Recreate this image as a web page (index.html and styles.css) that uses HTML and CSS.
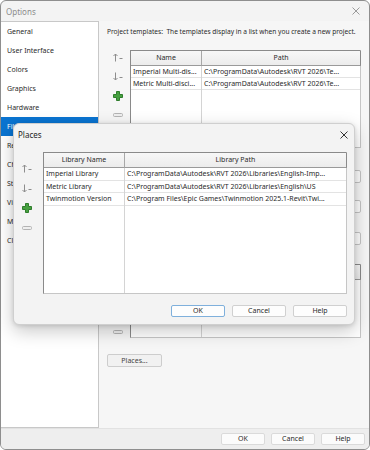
FILE: index.html
```html
<!DOCTYPE html>
<html>
<head>
<meta charset="utf-8">
<link rel="stylesheet" href="styles.css">
</head>
<body>
<div class="win">
  <div class="titlebar">
    <span class="title">Options</span>
    <svg class="xicon xgray" width="8" height="8" viewBox="0 0 8 8"><path d="M0.5 0.5L7.5 7.5M7.5 0.5L0.5 7.5"/></svg>
  </div>
  <div class="main">
    <ul class="nav">
      <li>General</li>
      <li>User Interface</li>
      <li>Colors</li>
      <li>Graphics</li>
      <li>Hardware</li>
      <li class="sel">File Locations</li>
      <li>Rendering</li>
      <li>Check Spelling</li>
      <li>SteeringWheels</li>
      <li>ViewCube</li>
      <li>Macros</li>
      <li>Cloud Model</li>
    </ul>
    <div class="content">
      <p class="desc">Project templates:&nbsp; The templates display in a list when you create a new project.</p>
      <div class="listrow lr1">
        <div class="tools">
          <div class="slot"><svg width="11" height="9" viewBox="0 0 11 9"><path class="ar" d="M2.5 8.5V1M0.5 3L2.5 1L4.5 3M6.5 5.5H9.5"/></svg></div>
          <div class="slot"><svg width="11" height="9" viewBox="0 0 11 9"><path class="ar" d="M2.5 0.5V8M0.5 6L2.5 8L4.5 6M6.5 5.5H9.5"/></svg></div>
          <div class="slot"><svg width="10" height="10" viewBox="0 0 10 10"><path class="plus" d="M3.5 0.5h3v3h3v3h-3v3h-3v-3h-3v-3h3z"/></svg></div>
          <div class="slot"><svg width="10" height="4" viewBox="0 0 10 4"><rect class="minus" x="0.5" y="0.5" width="9" height="3" rx="1"/></svg></div>
        </div>
        <div class="grid g1">
          <div class="col cname1">
            <div class="hd">Name</div>
            <div class="cell">Imperial Multi-dis...</div>
            <div class="cell">Metric Multi-disci...</div>
          </div>
          <div class="col cpath">
            <div class="hd">Path</div>
            <div class="cell">C:\ProgramData\Autodesk\RVT 2026\Te...</div>
            <div class="cell">C:\ProgramData\Autodesk\RVT 2026\Te...</div>
          </div>
        </div>
      </div>
      <div class="field f1">
        <div class="frow"><span class="input"></span><button class="btn browse" aria-label="Browse"></button></div>
      </div>
      <div class="field">
        <div class="frow"><span class="input"></span><button class="btn browse" aria-label="Browse"></button></div>
      </div>
      <div class="field f3">
        <div class="frow"><span class="input"></span><button class="btn browse" aria-label="Browse"></button></div>
      </div>
      <div class="listrow lr2">
        <div class="tools t2">
          <div class="slot"><svg width="11" height="9" viewBox="0 0 11 9"><path class="ar" d="M2.5 8.5V1M0.5 3L2.5 1L4.5 3M6.5 5.5H9.5"/></svg></div>
          <div class="slot"><svg width="11" height="9" viewBox="0 0 11 9"><path class="ar" d="M2.5 0.5V8M0.5 6L2.5 8L4.5 6M6.5 5.5H9.5"/></svg></div>
          <div class="slot"><svg width="10" height="10" viewBox="0 0 10 10"><path class="plus" d="M3.5 0.5h3v3h3v3h-3v3h-3v-3h-3v-3h3z"/></svg></div>
          <div class="slot"><svg width="10" height="4" viewBox="0 0 10 4"><rect class="minus" x="0.5" y="0.5" width="9" height="3" rx="1"/></svg></div>
        </div>
        <div class="grid g2">
          <div class="col cname2">
            <div class="hd"></div>
          </div>
          <div class="col cpath">
            <div class="hd"></div>
          </div>
        </div>
      </div>
      <button class="btn placesbtn">Places...</button>
    </div>
  </div>
  <div class="footer">
    <button class="btn fbtn">OK</button>
    <button class="btn fbtn">Cancel</button>
    <button class="btn fbtn">Help</button>
  </div>
</div>

<div class="dialog">
  <div class="dhead">
    <span class="dtitle">Places</span>
    <svg class="xicon xdark" width="8" height="8" viewBox="0 0 8 8"><path d="M0.5 0.5L7.5 7.5M7.5 0.5L0.5 7.5"/></svg>
  </div>
  <div class="dbody">
    <div class="tools dtools">
      <div class="slot"><svg width="11" height="9" viewBox="0 0 11 9"><path class="ar" d="M2.5 8.5V1M0.5 3L2.5 1L4.5 3M6.5 5.5H9.5"/></svg></div>
      <div class="slot"><svg width="11" height="9" viewBox="0 0 11 9"><path class="ar" d="M2.5 0.5V8M0.5 6L2.5 8L4.5 6M6.5 5.5H9.5"/></svg></div>
      <div class="slot"><svg width="10" height="10" viewBox="0 0 10 10"><path class="plus" d="M3.5 0.5h3v3h3v3h-3v3h-3v-3h-3v-3h3z"/></svg></div>
      <div class="slot"><svg width="10" height="4" viewBox="0 0 10 4"><rect class="minus" x="0.5" y="0.5" width="9" height="3" rx="1"/></svg></div>
    </div>
    <div class="grid g3">
      <div class="col cname3">
        <div class="hd">Library Name</div>
        <div class="cell dcell">Imperial Library</div>
        <div class="cell dcell">Metric Library</div>
        <div class="cell dcell">Twinmotion Version</div>
      </div>
      <div class="col cpath">
        <div class="hd">Library Path</div>
        <div class="cell dcell">C:\ProgramData\Autodesk\RVT 2026\Libraries\English-Imp...</div>
        <div class="cell dcell">C:\ProgramData\Autodesk\RVT 2026\Libraries\English\US</div>
        <div class="cell dcell">C:\Program Files\Epic Games\Twinmotion 2025.1-Revit\Twi...</div>
      </div>
    </div>
  </div>
  <div class="dfoot">
    <button class="btn dbtn def">OK</button>
    <button class="btn dbtn">Cancel</button>
    <button class="btn dbtn">Help</button>
  </div>
</div>
</body>
</html>
```

FILE: styles.css
```css
* { box-sizing: border-box; margin: 0; padding: 0; }
html, body { width: 370px; height: 450px; overflow: hidden; }
body {
  position: relative;
  background: #ffffff;
  font-family: "Noto Sans", "Open Sans", sans-serif;
  font-size: 7px;
  color: #2a2a2a;
}
.win {
  width: 370px;
  height: 450px;
  border: 1px solid #8e8e8e;
  border-radius: 6px;
  background: #f3f3f3;
  display: flex;
  flex-direction: column;
  overflow: hidden;
}
.titlebar {
  height: 20px;
  flex: none;
  display: flex;
  align-items: center;
  justify-content: space-between;
  padding: 0 9px 0 5px;
  color: #8c8c8c;
  font-size: 8px;
}
.xicon path { fill: none; stroke-width: 1; }
.xgray path { stroke: #9a9a9a; }
.xdark path { stroke: #333; }
.main { flex: 1; display: flex; min-height: 0; }
.nav {
  list-style: none;
  width: 98px;
  flex: none;
  background: #ffffff;
  border: 1px solid #c8c8c8;
  border-left: none;
}
.nav li {
  height: 19px;
  line-height: 19px;
  padding-left: 6px;
  white-space: nowrap;
}
.nav li.sel { background: #0a74d1; color: #ffffff; }
.content {
  flex: 1;
  min-width: 0;
  overflow: hidden;
  background: #f6f6f6;
  padding: 0 8px 0 8px;
  display: flex;
  flex-direction: column;
  align-items: stretch;
}
.desc {
  margin-top: 6px;
  height: 10px;
  line-height: 10px;
  font-size: 6.6px;
  white-space: nowrap;
}
.listrow { display: flex; align-items: flex-start; }
.lr1 { margin-top: 11px; }
.lr2 { margin-top: 17px; }
.tools {
  width: 23px;
  flex: none;
  display: flex;
  flex-direction: column;
  padding-left: 6px;
}
.t2 { padding-top: 3px; }
.slot { height: 19px; display: flex; align-items: center; }
.slot svg { display: block; }
.ar { fill: none; stroke: #8d8d8d; stroke-width: 1; }
.plus { fill: #46a040; stroke: #2f7d2c; stroke-width: 1; }
.minus { fill: #eeeeee; stroke: #b3b3b3; stroke-width: 1; }
.grid {
  flex: 1;
  min-width: 0;
  display: flex;
  background: #ffffff;
  border: 1px solid #c6c6c6;
  border-left-color: #8a8a8a;
  border-top-color: #8a8a8a;
  margin-top: 2px;
}
.g1 { height: 98px; }
.g2 { height: 74px; margin-top: 2px; }
.col { display: flex; flex-direction: column; border-right: 1px solid #d4d4d4; min-width: 0; }
.col.cpath { flex: 1; border-right: none; }
.cname1 { width: 71px; flex: none; }
.cname2 { width: 71px; flex: none; }
.cname3 { width: 81px; flex: none; }
.hd {
  height: 15px;
  line-height: 14px;
  text-align: center;
  background: linear-gradient(#f7f7f7, #ececec);
  border-bottom: 1px solid #9a9a9a;
  border-right: 1px solid #a8a8a8;
  white-space: nowrap;
}
.col.cpath .hd { border-right: 1px solid #8a8a8a; }
.col .hd { margin-right: -1px; }
.cell {
  height: 12px;
  line-height: 11px;
  padding-left: 2px;
  border-bottom: 1px solid #e3e3e3;
  white-space: nowrap;
  overflow: hidden;
}
.dcell { height: 12.5px; line-height: 11.5px; }
.field {
  height: 30px;
  display: flex;
  flex-direction: column;
  justify-content: flex-end;
  padding-left: 23px;
}
.f1 { margin-top: 5px; }
.f3 { margin-top: 2px; }
.frow { display: flex; gap: 6px; height: 13px; }
.input {
  flex: 1;
  background: #fff;
  border: 1px solid #c8c8c8;
}
.btn {
  font-family: inherit;
  font-size: 7px;
  color: #2a2a2a;
  background: #fdfdfd;
  border: 1px solid #d2d2d2;
  border-radius: 2px;
  height: 13px;
  line-height: 11px;
  text-align: center;
}
.browse { width: 54px; border-color: #c4c4c4; }
.placesbtn {
  align-self: flex-start;
  width: 55px;
  margin-top: 13px;
  background: #f1f1f1;
  border-color: #cdcdcd;
  color: #444;
}
.footer {
  height: 21px;
  flex: none;
  background: #eeeeee;
  border-top: 1px solid #e2e2e2;
  display: flex;
  justify-content: flex-end;
  align-items: flex-start;
  gap: 6px;
  padding: 4px 4px 0 0;
}
.fbtn { width: 44px; height: 12px; line-height: 10px; border-color: #dadada; background: #fbfbfb; }

.dialog {
  position: absolute;
  left: 13px;
  top: 123px;
  width: 342px;
  height: 202px;
  background: #f3f3f3;
  border: 1px solid #cfcfcf;
  border-radius: 6px;
  box-shadow: 0 6px 18px rgba(0, 0, 0, 0.22), 0 1px 4px rgba(0, 0, 0, 0.12);
  display: flex;
  flex-direction: column;
}
.dhead {
  height: 28px;
  flex: none;
  display: flex;
  align-items: flex-start;
  justify-content: space-between;
  padding: 6px 6px 0 4px;
}
.dtitle { font-size: 8px; color: #1e1e1e; line-height: 10px; }
.dhead .xicon { margin-top: 1px; }
.dbody { display: flex; align-items: flex-start; height: 142px; flex: none; }
.dtools { width: 29px; padding-left: 8px; padding-top: 6px; }
.dtools .slot { height: 20px; }
.g3 { height: 142px; margin-top: 0; margin-right: 7px; }
.dfoot {
  display: flex;
  justify-content: flex-end;
  gap: 7px;
  padding: 11px 7px 0 0;
}
.dbtn { width: 54px; height: 12px; line-height: 10px; background: #fdfdfd; border-color: #d0d0d0; }
.dbtn.def { border-color: #7fb0dc; }
```
